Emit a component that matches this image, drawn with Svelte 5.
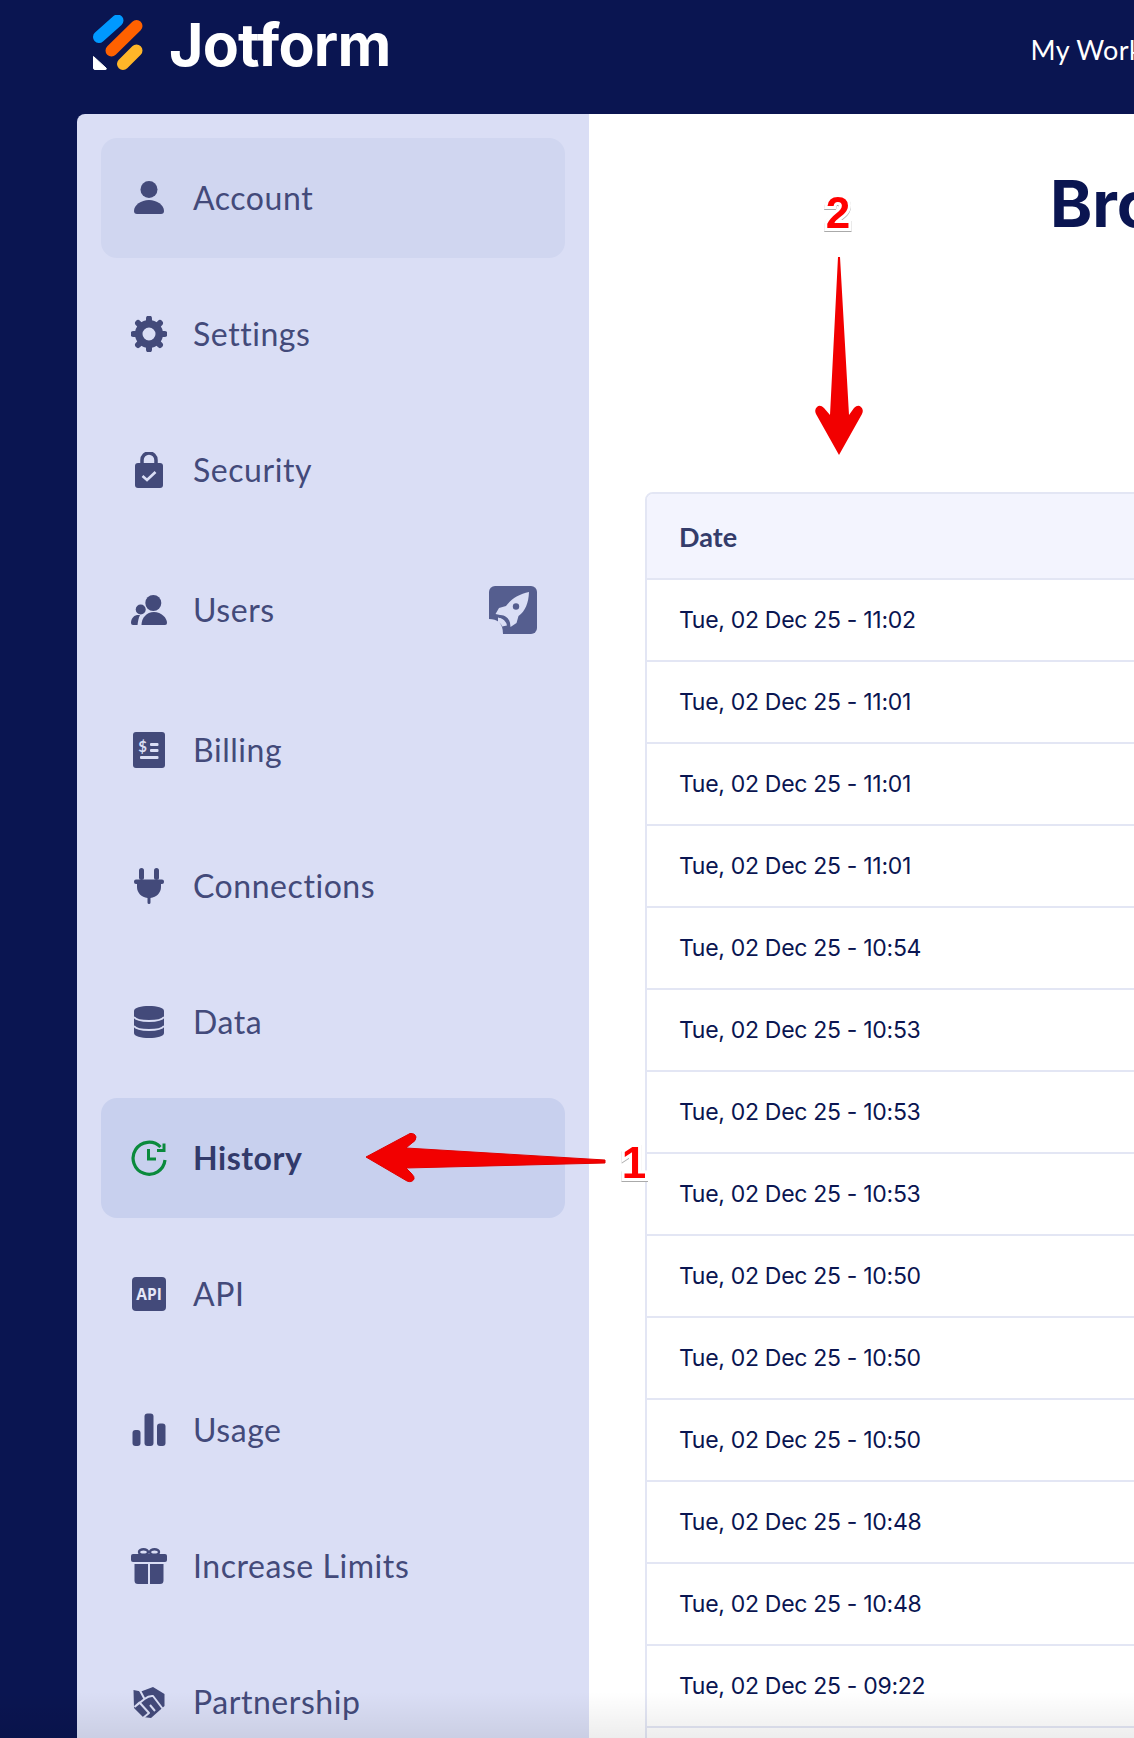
<script>
const dates = ['11:02', '11:01', '11:01', '11:01', '10:54', '10:53', '10:53', '10:53', '10:50', '10:50', '10:50', '10:48', '10:48', '09:22', '']
const items = [
	{ id: 'account', label: 'Account', hover: true },
	{ id: 'settings', label: 'Settings' },
	{ id: 'security', label: 'Security' },
	{ id: 'users', label: 'Users', badge: true },
	{ id: 'billing', label: 'Billing' },
	{ id: 'connections', label: 'Connections' },
	{ id: 'data', label: 'Data' },
	{ id: 'history', label: 'History', active: true },
	{ id: 'api', label: 'API' },
	{ id: 'usage', label: 'Usage' },
	{ id: 'limits', label: 'Increase Limits' },
	{ id: 'partnership', label: 'Partnership' }
]
const teeth = [0, 45, 90, 135, 180, 225, 270, 315]
</script>

<div class="page">
	<header>
		<svg class="logo" viewBox="0 0 52 56" width="52" height="56">
			<path d="M7 22 L25.500 5.500" stroke="#0099ff" stroke-width="12" stroke-linecap="round" />
			<path d="M19.500 35.500 L44.500 11" stroke="#ff6100" stroke-width="12" stroke-linecap="round" />
			<path d="M31 49 L44.500 35.500" stroke="#ffb629" stroke-width="12" stroke-linecap="round" />
			<path d="M1.500 41.500 L14 53 Q15 54.500 13 54.500 H3 Q1.500 54.500 1.500 53 Z" fill="#fff" stroke="#fff" stroke-linejoin="round" />
		</svg>
		<span class="brand">Jotform</span>
		<span class="nav">My Workspace</span>
	</header>

	<div class="content">
		<aside>
			{#each items as item}
				<div class="item" class:hover={item.hover} class:active={item.active} class:tall={item.badge}>
					<span class="icon">
						{#if item.id === 'account'}
							<svg viewBox="0 0 36 36"><circle cx="18" cy="9.500" r="8.500" /><path d="M3 31C3 25 10 20 18 20S33 25 33 31a3 3 0 0 1-3 3H6a3 3 0 0 1-3-3z" /></svg>
						{:else if item.id === 'settings'}
							<svg viewBox="0 0 36 36">
								<circle cx="18" cy="18" r="10.250" fill="none" stroke="#434a7a" stroke-width="7.500" />
								{#each teeth as a}
									<path d="M18 5V2.500" stroke="#434a7a" stroke-width="6" stroke-linecap="round" transform="rotate({a} 18 18)" />
								{/each}
							</svg>
						{:else if item.id === 'security'}
							<svg viewBox="0 0 36 36">
								<path d="M11 13V8a7 7 0 0 1 14 0v5" fill="none" stroke="#434a7a" stroke-width="3.500" />
								<rect x="4" y="11" width="28" height="25" rx="3" />
								<path d="M11.500 24l4.500 4 8.500-8" fill="none" stroke="#dadef5" stroke-width="2.600" />
							</svg>
						{:else if item.id === 'users'}
							<svg viewBox="0 0 36 36">
								<circle cx="22.300" cy="11" r="8" />
								<circle cx="9.700" cy="17.500" r="5" />
								<path d="M10.500 33c0-7 5-13 12.500-13S36 26 36 31a2 2 0 0 1-2 2z" />
								<path d="M0 31c0-4 2-7 6-8h3c-1.500 3-2 6-2.500 10H2a2 2 0 0 1-2-2z" />
							</svg>
						{:else if item.id === 'billing'}
							<svg viewBox="0 0 36 36">
								<rect x="2" y="0" width="32" height="36" rx="3" />
								<text x="11.700" y="19.500" class="dollar">$</text>
								<rect x="19" y="11" width="8.500" height="3" rx="1" class="light" />
								<rect x="19" y="17" width="8.500" height="3" rx="1" class="light" />
								<rect x="9" y="24" width="18.500" height="3" rx="1" class="light" />
							</svg>
						{:else if item.id === 'connections'}
							<svg viewBox="0 0 36 36">
								<rect x="8" y="0" width="5" height="12" rx="2.500" />
								<rect x="23" y="0" width="5" height="12" rx="2.500" />
								<rect x="3" y="11.500" width="30" height="4.500" rx="2" />
								<path d="M6 16h24v3c0 6-4.500 10-10.500 11v4.500a1.500 1.500 0 0 1-3 0V30C10.500 29 6 25 6 19z" />
							</svg>
						{:else if item.id === 'data'}
							<svg viewBox="0 0 36 36">
								<path d="M3 7c0-3.500 7-5 15-5s15 1.500 15 5v22c0 3.500-7 5-15 5S3 32.500 3 29z" />
								<path d="M3 13c2 3 9 4 15 4s13-1 15-4M3 22c2 3 9 4 15 4s13-1 15-4" fill="none" stroke="#dadef5" stroke-width="1.800" />
							</svg>
						{:else if item.id === 'history'}
							<svg viewBox="0 0 36 36">
								<g fill="none" stroke="#0a8a3c">
									<path d="M34 20A16 16 0 1 1 29.500 7" stroke-width="3.200" />
									<path d="M33 3.500v7h-7" stroke-width="3" />
									<path d="M17.500 9V19H25" stroke-width="3" />
								</g>
							</svg>
						{:else if item.id === 'api'}
							<svg viewBox="0 0 36 36">
								<rect x="1" y="1" width="34" height="34" rx="4" />
								<text x="18" y="23.500" class="apitext">API</text>
							</svg>
						{:else if item.id === 'usage'}
							<svg viewBox="0 0 36 36">
								<rect x="1.500" y="18" width="8" height="16" rx="3" />
								<rect x="13.500" y="1.500" width="9" height="32.500" rx="3" />
								<rect x="26" y="11.500" width="8.500" height="22.500" rx="3" />
							</svg>
						{:else if item.id === 'limits'}
							<svg viewBox="0 0 36 36">
								<ellipse cx="12.500" cy="4" rx="4.500" ry="2.800" fill="none" stroke="#434a7a" stroke-width="2.400" />
								<ellipse cx="23.500" cy="4" rx="4.500" ry="2.800" fill="none" stroke="#434a7a" stroke-width="2.400" />
								<rect x="0" y="6" width="36" height="8" rx="2" />
								<path d="M3.500 16H17V36H7a3.500 3.500 0 0 1-3.500-3.500zM19 16H32.500v16.500A3.500 3.500 0 0 1 29 36H19z" />
							</svg>
						{:else if item.id === 'partnership'}
							<svg viewBox="0 0 36 36">
								<path d="M2.500 6 L10 7.500 L22 3 L33.500 10 V22 L20 34 L12 33 L3 24z" />
								<path d="M9 6.500 L13.500 15 L3.500 23 M13.500 15 Q18 11.500 22 12 L31.500 24.500 M3.500 23 L8.500 18.500 L18 29 L12 34 M19 21 L24 27" fill="none" stroke="#dadef5" stroke-width="2" stroke-linejoin="round" />
							</svg>
						{/if}
					</span>
					<span class="label">{item.label}</span>
					{#if item.badge}
						<svg class="badge" viewBox="0 0 48 48" width="48" height="48">
							<rect width="48" height="48" rx="6" fill="#555e8f" />
							<path d="M0 33q6 0 10 3 4 4 4 12H0z" fill="#dadef5" />
							<path d="M40 6C30 8 22 13 17 20L10 22 6.500 28 11 29c5 0 9 3 10 8l.500 4 6-4 2-7c7-5 10-13 10.500-24z" fill="#dadef5" />
							<circle cx="27" cy="20.500" r="3.200" fill="#555e8f" />
							<path d="M9 34c3 0 6 3 6.500 6" fill="none" stroke="#dadef5" stroke-width="5" />
							<path d="M10 30.500c5 0 9 3.500 10 9" fill="none" stroke="#555e8f" stroke-width="2.400" />
						</svg>
					{/if}
				</div>
			{/each}
		</aside>

		<main>
			<h1>Browser History</h1>
			<div class="table">
				<div class="thead">Date</div>
				{#each dates as time}
					<div class="row">{time ? `Tue, 02 Dec 25 - ${time}` : ''}</div>
				{/each}
			</div>
		</main>
	</div>

	<svg class="marks" viewBox="0 0 1134 1738" width="1134" height="1738">
		<path d="M366 1157 L410 1133.500 Q415 1133 416 1137 Q416 1141 412 1143 L406 1148 L605 1160 L605 1163 L406 1168 L411 1173 Q415 1177 414 1179 Q412 1183 407 1181z" fill="#f20000" stroke="#e00000" stroke-linejoin="round" />
		<path d="M838 257 H840 L849 415 L854 408 Q858 404 861 407 Q864 410 862 414 L839 455 L816 414 Q814 410 817 407 Q820 404 824 408 L830 415z" fill="#f20000" />
		<text x="634" y="1178" class="num" text-anchor="middle">1</text>
		<text x="838" y="228" class="num" text-anchor="middle">2</text>
	</svg>
	<div class="fade"></div>
</div>

<style>
:global(body) {
	margin: 0;
}
.page {
	position: relative;
	width: 1134px;
	height: 1738px;
	overflow: hidden;
	background: #0a1551;
	font-family: Lato, 'Liberation Sans', sans-serif;
}
header {
	height: 114px;
	display: flex;
	align-items: flex-start;
	padding-left: 92px;
	box-sizing: border-box;
	color: #fff;
}
.logo {
	margin-top: 15px;
	flex: none;
}
.brand {
	margin-left: 25px;
	margin-top: 9px;
	font-size: 59px;
	line-height: 72px;
	font-weight: 700;
	font-family: Inter, sans-serif;
	letter-spacing: -0.8px;
}
.nav {
	margin-left: 640px;
	margin-top: 32px;
	font-size: 27px;
	line-height: 36px;
	letter-spacing: 0.4px;
	white-space: nowrap;
}
.content {
	display: flex;
	padding-left: 77px;
}
aside {
	width: 512px;
	flex: none;
	box-sizing: border-box;
	background: #dadef5;
	border-radius: 8px 0 0 0;
	padding: 24px 24px 0;
	height: 1624px;
	display: flex;
	flex-direction: column;
	gap: 16px;
}
.item {
	height: 120px;
	flex: none;
	display: flex;
	align-items: center;
	padding: 0 28px 0 30px;
	border-radius: 16px;
	color: #434a7a;
	font-size: 32px;
}
.item.tall {
	height: 128px;
}
.item.hover {
	background: #d0d6f0;
}
.item.active {
	background: #c8d0ee;
	color: #323a6b;
	font-weight: 700;
}
.icon {
	width: 36px;
	height: 36px;
	margin-right: 26px;
	flex: none;
}
.icon svg {
	display: block;
	width: 36px;
	height: 36px;
	fill: #434a7a;
}
.label {
	margin-bottom: 2px;
	letter-spacing: 0.55px;
}
.dollar {
	font-size: 15px;
	font-weight: 700;
	text-anchor: middle;
	fill: #dadef5;
	font-family: Lato, sans-serif;
}
.light {
	fill: #dadef5;
}
.apitext {
	font-size: 15.500px;
	font-weight: 700;
	text-anchor: middle;
	fill: #e4e7f8;
	font-family: 'Open Sans', sans-serif;
}
.badge {
	margin-left: auto;
	flex: none;
}
main {
	flex: 1;
	min-width: 0;
	background: #fff;
	padding-left: 56px;
	height: 1624px;
}
h1 {
	margin: 0;
	height: 378px;
	padding: 51px 0 0 405px;
	box-sizing: border-box;
	font-size: 64px;
	line-height: 78px;
	font-weight: 700;
	color: #0a1551;
	white-space: nowrap;
	font-family: Inter, sans-serif;
}
.table {
	width: 900px;
	border: 2px solid #e3e6f4;
	border-radius: 8px 8px 0 0;
	box-sizing: border-box;
}
.thead {
	height: 86px;
	box-sizing: border-box;
	background: #f3f4fe;
	border-bottom: 2px solid #e3e6f4;
	border-radius: 6px 6px 0 0;
	padding-left: 32px;
	display: flex;
	align-items: center;
	font-size: 27px;
	font-weight: 700;
	color: #343c6a;
}
.row {
	height: 82px;
	box-sizing: border-box;
	border-bottom: 2px solid #e3e6f4;
	padding-left: 32px;
	display: flex;
	align-items: center;
	font-size: 23px;
	letter-spacing: -0.3px;
	color: #0a1551;
	font-family: Inter, sans-serif;
}
.marks {
	position: absolute;
	left: 0;
	top: 0;
	pointer-events: none;
}
.num {
	font-family: 'Liberation Sans', sans-serif;
	font-size: 44px;
	font-weight: 700;
	fill: #f00;
	stroke: #fff;
	stroke-width: 6px;
	paint-order: stroke;
	filter: drop-shadow(0 1px 0 #aaa);
}
.fade {
	position: absolute;
	left: 0;
	right: 0;
	bottom: 0;
	height: 46px;
	background: linear-gradient(rgba(0, 0, 0, 0), rgba(0, 0, 0, 0.07));
	pointer-events: none;
}
</style>
